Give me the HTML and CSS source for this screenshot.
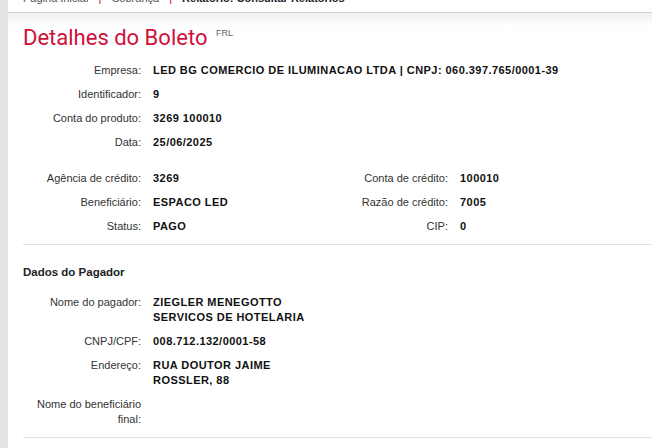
FILE: index.html
```html
<!DOCTYPE html>
<html lang="pt-BR">
<head>
    <meta charset="UTF-8">
    <title>Detalhes do Boleto</title>
    <link rel="stylesheet" href="styles.css">
</head>
<body>
    <div class="page">
        <div class="crumbs">
            <div class="crumbs-text">
                <span>Página Inicial</span>
                <span class="sep">|</span>
                <span>Cobrança</span>
                <span class="sep">|</span>
                <span class="current">Relatório: Consultar Relatórios</span>
            </div>
        </div>
        <div class="shade"></div>

        <div class="content">
            <h1 class="title">Detalhes do Boleto <sup>FRL</sup></h1>

            <div class="fields">
                <div class="label">Empresa:</div>
                <div class="value">LED BG COMERCIO DE ILUMINACAO LTDA | CNPJ: 060.397.765/0001-39</div>
                <div class="label">Identificador:</div>
                <div class="value">9</div>
                <div class="label">Conta do produto:</div>
                <div class="value">3269 100010</div>
                <div class="label">Data:</div>
                <div class="value">25/06/2025</div>
            </div>

            <div class="split">
                <div class="fields">
                    <div class="label">Agência de crédito:</div>
                    <div class="value">3269</div>
                    <div class="label">Beneficiário:</div>
                    <div class="value">ESPACO LED</div>
                    <div class="label">Status:</div>
                    <div class="value">PAGO</div>
                </div>
                <div class="fields">
                    <div class="label">Conta de crédito:</div>
                    <div class="value">100010</div>
                    <div class="label">Razão de crédito:</div>
                    <div class="value">7005</div>
                    <div class="label">CIP:</div>
                    <div class="value">0</div>
                </div>
            </div>

            <hr class="rule">

            <h2 class="section">Dados do Pagador</h2>
            <div class="fields narrow">
                <div class="label">Nome do pagador:</div>
                <div class="value">ZIEGLER MENEGOTTO SERVICOS DE HOTELARIA</div>
                <div class="label">CNPJ/CPF:</div>
                <div class="value">008.712.132/0001-58</div>
                <div class="label">Endereço:</div>
                <div class="value">RUA DOUTOR JAIME ROSSLER, 88</div>
                <div class="label">Nome do beneficiário final:</div>
                <div class="value"></div>
            </div>

            <hr class="rule">
        </div>
    </div>
</body>
</html>
```

FILE: styles.css
```css
body {
    margin: 0;
    font-family: "Liberation Sans", Arial, sans-serif;
    font-size: 11px;
    line-height: 15px;
    color: #222;
    background: #fff;
}
.page {
    border-left: 8px solid #e4e4e4;
    min-height: 448px;
}
.crumbs {
    height: 12px;
    overflow: hidden;
    border-bottom: 1px solid #d2d2d2;
    padding-left: 15px;
}
.crumbs-text {
    margin-top: -9px;
    color: #555;
    font-size: 11px;
}
.crumbs-text .sep {
    color: #d00;
    margin: 0 7px;
}
.crumbs-text .current {
    color: #222;
    font-weight: bold;
}
.shade {
    height: 14px;
    background: linear-gradient(#f0f0f0, #fff);
    margin-bottom: -14px;
}
.content {
    padding: 5px 0 0 15px;
}
.title {
    font-family: Roboto, "Liberation Sans", sans-serif;
    font-weight: normal;
    font-size: 22px;
    line-height: 30px;
    color: #d0103c;
    margin: 0 0 10px;
}
.title sup {
    font-family: "Liberation Sans", Arial, sans-serif;
    font-size: 9px;
    color: #666;
    vertical-align: 9px;
    margin-left: 3px;
}
.fields {
    display: grid;
    grid-template-columns: 118px 1fr;
    column-gap: 12px;
    row-gap: 9px;
    align-content: start;
}
.fields.narrow {
    grid-template-columns: 118px 170px;
}
.label {
    text-align: right;
    color: #333;
}
.value {
    font-weight: bold;
    color: #111;
    letter-spacing: 0.45px;
}
.split {
    display: grid;
    grid-template-columns: 307px 1fr;
    margin-top: 21px;
}
.rule {
    border: 0;
    border-top: 1px solid #e0e0e0;
    margin: 10px 0 0;
}
.section {
    font-size: 11.5px;
    font-weight: bold;
    color: #222;
    margin: 20px 0 15px;
    line-height: 15px;
}
```
